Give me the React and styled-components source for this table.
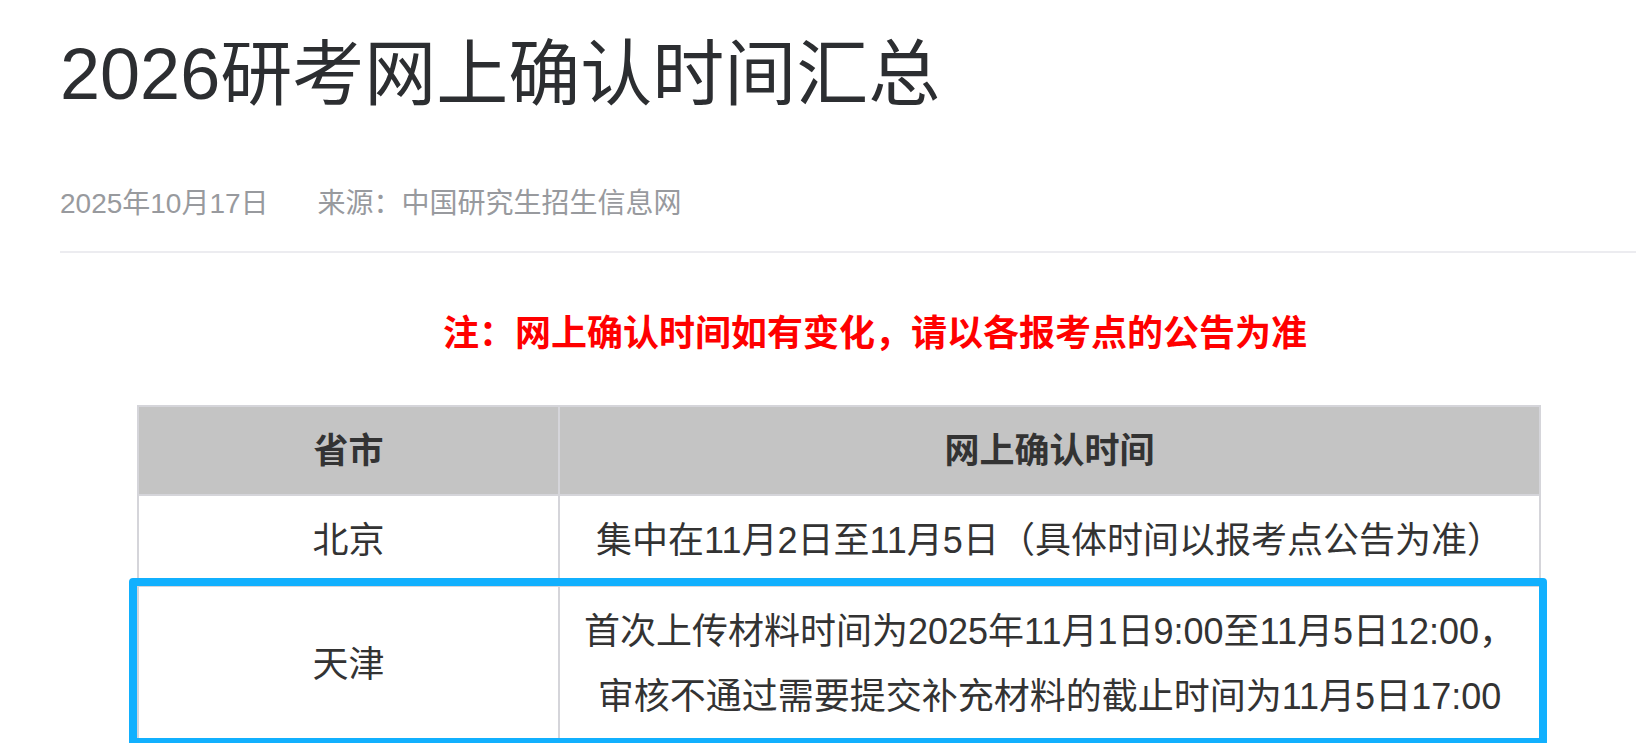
import React from 'react'
import styled, { createGlobalStyle } from 'styled-components'

const GlobalStyle = createGlobalStyle`
  html, body {
    margin: 0;
    padding: 0;
    background: #fff;
    overflow: hidden;
  }
  body {
    font-family: 'Liberation Sans', 'Noto Sans CJK SC', sans-serif;
    color: #333;
  }
`

const rows = [
  { city: '北京', lines: ['集中在11月2日至11月5日（具体时间以报考点公告为准）'] },
  {
    city: '天津',
    lines: [
      '首次上传材料时间为2025年11月1日9:00至11月5日12:00，',
      '审核不通过需要提交补充材料的截止时间为11月5日17:00',
    ],
    highlight: true,
  },
]

const Page = styled.div`
  width: 1630px;
  padding: 31px 0 0 60px;
`

const Title = styled.h1`
  margin: 0;
  font-size: 72px;
  font-weight: 400;
  line-height: 1.2;
  color: #2c2e31;
`

const Meta = styled.div`
  display: flex;
  gap: 49px;
  margin-top: 66px;
  font-size: 28px;
  line-height: 42px;
  color: #989a9e;
`

const Divider = styled.hr`
  margin: 26px 0 0;
  border: none;
  height: 2px;
  background: #ececf0;
`

const Note = styled.p`
  margin: 54px 0 0;
  text-align: center;
  font-size: 36px;
  line-height: 54px;
  font-weight: 700;
  color: #f00;
`

const Table = styled.div`
  width: 1404px;
  box-sizing: border-box;
  margin: 44px 0 0 77px;
  border: 2px solid #d5d5da;
`

const Row = styled.div`
  position: relative;
  display: grid;
  grid-template-columns: 419px 1fr;
  background: ${({ $head }) => ($head ? '#c4c4c4' : '#fff')};
  & + & {
    border-top: 2px solid #d5d5da;
  }
  ${({ $highlight }) => $highlight && `
    &::after {
      content: '';
      position: absolute;
      top: -9px;
      left: -10px;
      right: -8px;
      bottom: -5px;
      border: 8px solid #11b0fe;
      border-radius: 4px;
      pointer-events: none;
    }
  `}
`

const Cell = styled.div`
  display: flex;
  flex-direction: column;
  justify-content: center;
  align-items: center;
  padding: ${({ $head }) => ($head ? '11px' : '12px')} 0;
  font-size: ${({ $head }) => ($head ? '35px' : '36px')};
  line-height: 65px;
  font-weight: ${({ $head }) => ($head ? 700 : 400)};
  color: #333;
  text-align: center;
  & + & {
    border-left: 2px solid #d5d5da;
  }
`

export default function App() {
  return (
    <>
      <GlobalStyle />
      <Page>
        <Title>2026研考网上确认时间汇总</Title>
        <Meta>
          <span>2025年10月17日</span>
          <span>来源：中国研究生招生信息网</span>
        </Meta>
        <Divider />
        <Note>注：网上确认时间如有变化，请以各报考点的公告为准</Note>
        <Table>
          <Row $head>
            <Cell $head>省市</Cell>
            <Cell $head>网上确认时间</Cell>
          </Row>
          {rows.map(r => (
            <Row key={r.city} $highlight={r.highlight}>
              <Cell>{r.city}</Cell>
              <Cell>
                {r.lines.map(l => <span key={l}>{l}</span>)}
              </Cell>
            </Row>
          ))}
        </Table>
      </Page>
    </>
  )
}
